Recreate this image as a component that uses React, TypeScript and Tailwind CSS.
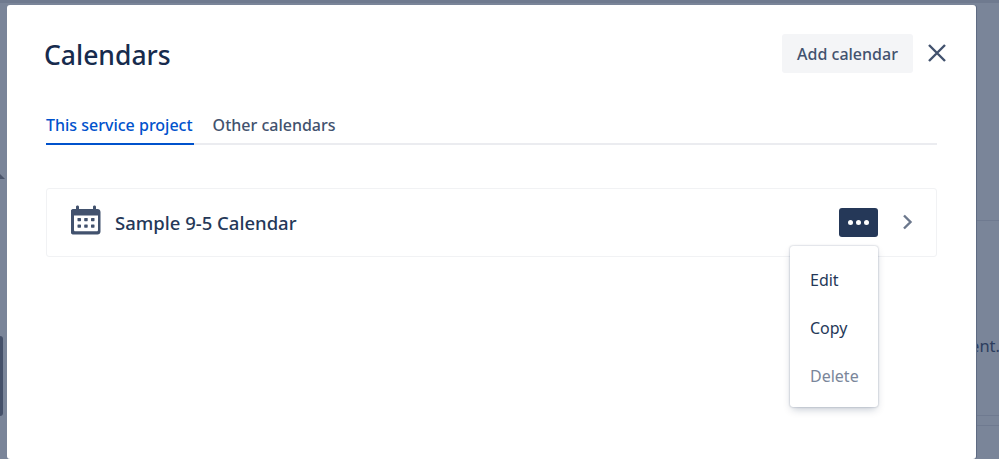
import React from "react";

function CalendarIcon() {
  return (
    <svg width="30" height="30" viewBox="0 0 30 30" className="block">
      <path
        fill="#42526e"
        fillRule="evenodd"
        d="M6.500 0.500c.9 0 1.500.6 1.500 1.400v2h14v-2c0-.8.6-1.400 1.500-1.400s1.500.6 1.500 1.400v2h1.500c1.700 0 3 1.300 3 3V26.500c0 1.700-1.300 3-3 3H2.500c-1.700 0-3-1.300-3-3V6.900c0-1.700 1.300-3 3-3H5v-2C5 1.100 5.600.5 6.500.5zM3 10.500V25c0 .8.500 1.300 1.300 1.300h21.400c.8 0 1.300-.5 1.300-1.300V10.500H3z"
      />
      <g fill="#42526e">
        <rect x="6.500" y="13" width="3.500" height="3.200" rx=".6" />
        <rect x="13.200" y="13" width="3.500" height="3.200" rx=".6" />
        <rect x="20" y="13" width="3.500" height="3.200" rx=".6" />
        <rect x="6.500" y="19.500" width="3.500" height="3.200" rx=".6" />
        <rect x="13.200" y="19.500" width="3.500" height="3.200" rx=".6" />
        <rect x="20" y="19.500" width="3.500" height="3.200" rx=".6" />
      </g>
    </svg>
  );
}

export default function App() {
  return (
    <div className="relative h-[459px] w-[999px] overflow-hidden bg-[#7a8599] font-['Noto_Sans','Open_Sans',sans-serif]">
      <div className="absolute left-0 top-0 h-[3px] w-full bg-[#6f7a8f]" />
      <div className="absolute left-0 top-[336px] h-[80px] w-[3px] rounded-r-[3px] bg-[#445069]" />
      <div className="absolute left-0 top-[174px] h-0 w-0 border-b-[5px] border-r-[5px] border-b-[#4a556b] border-r-transparent" />
      <div className="absolute left-[976px] top-[340px] text-[16.500px] leading-[12px] text-[#2c3d5e]">
        <span className="absolute right-[-24px] top-0">ent.</span>
      </div>
      <div className="absolute left-[976px] top-[220px] h-px w-[23px] bg-[#6f7a90]" />
      <div className="absolute left-[976px] top-[415px] h-px w-[23px] bg-[#6f7a90]" />
      <div className="absolute left-[976px] top-[425px] h-px w-[23px] bg-[#6f7a90]" />

      <div className="relative ml-[7px] h-[454px] w-[969px] translate-y-[5px] rounded-[3px] bg-white pl-[39px] pr-[39px] text-[#172b4d] shadow-[1px_0_0_#5f6b83]">
        <div className="flex h-[68px] items-end justify-between">
          <h1 className="-ml-[2px] text-[26.500px] font-medium leading-[36px] text-[#172b4d]">Calendars</h1>
          <div className="-mr-[10px] flex items-center gap-[14px]">
            <button className="h-[39px] w-[131px] rounded-[3px] bg-[#f4f5f7] text-[16px] font-medium text-[#42526e]">
              Add calendar
            </button>
            <svg width="20" height="20" viewBox="0 0 20 20" className="mb-[1px]">
              <path d="M2 2 L18 18 M18 2 L2 18" stroke="#42526e" strokeWidth="2.400" fill="none" />
            </svg>
          </div>
        </div>

        <div className="mt-[40px] flex h-[24px] gap-[20px] text-[16px] font-medium leading-[24px]">
          <span className="text-[#0052cc]">This service project</span>
          <span className="text-[#42526e]">Other calendars</span>
        </div>
        <div className="relative mt-[6px] h-[2px] bg-[#ebecf0]">
          <div className="absolute left-0 top-0 h-[2px] w-[148px] bg-[#0052cc]" />
        </div>

        <div className="mt-[43px] flex h-[69px] items-center rounded-[3px] border border-[#f1f2f4] pl-[24px] pr-[22px]">
          <div className="-mt-[6px]">
            <CalendarIcon />
          </div>
          <span className="ml-[14px] text-[18.500px] font-medium text-[#253858]">Sample 9-5 Calendar</span>
          <button className="ml-auto -mt-[1px] flex h-[29px] w-[39px] items-center justify-center gap-[3px] rounded-[3px] bg-[#253858]">
            <i className="h-[5px] w-[5px] rounded-full bg-white" />
            <i className="h-[5px] w-[5px] rounded-full bg-white" />
            <i className="h-[5px] w-[5px] rounded-full bg-white" />
          </button>
          <svg width="12" height="18" viewBox="0 0 12 18" className="ml-[24px] -mt-[1px]">
            <path d="M2 2.500 L8.500 9 L2 15.500" stroke="#6b778c" strokeWidth="2.400" fill="none" />
          </svg>
        </div>

        <div className="absolute left-[783px] top-[241px] flex h-[161px] w-[88px] flex-col justify-center rounded-[3px] bg-white pl-[20px] pt-[2px] text-[16px] leading-[48px] shadow-[0_0_2px_rgba(9,30,66,0.35),0_4px_8px_-2px_rgba(9,30,66,0.25)]">
          <span className="text-[#253858]">Edit</span>
          <span className="text-[#253858]">Copy</span>
          <span className="text-[#7a869a]">Delete</span>
        </div>
      </div>
    </div>
  );
}
